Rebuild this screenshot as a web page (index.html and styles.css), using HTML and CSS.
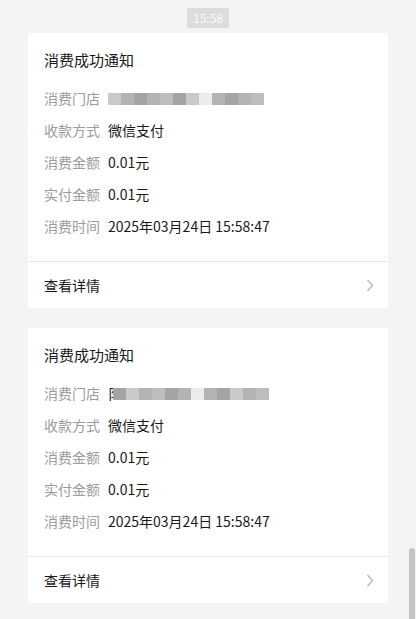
FILE: index.html
```html
<!DOCTYPE html>
<html lang="zh-CN">
<head>
    <meta charset="UTF-8">
    <meta name="viewport" content="width=device-width, initial-scale=1.0">
    <title>消费成功通知</title>
    <link rel="stylesheet" href="styles.css">
</head>
<body>
    <div id="chat">
        <!-- 时间标签 -->
        <div class="time-row"><span class="time-chip">15:58</span></div>

        <!-- 通知卡片 1 -->
        <div class="card">
            <div class="card-body">
                <div class="card-title">消费成功通知</div>
                <div class="field">
                    <span class="label">消费门店</span>
                    <span class="mosaic">
                        <i class="m1"></i><i class="m2"></i><i class="m3"></i><i class="m2"></i><i class="m4"></i><i class="m3"></i><i class="m1"></i><i class="m5"></i><i class="m2"></i><i class="m3"></i><i class="m2"></i><i class="m4"></i>
                    </span>
                </div>
                <div class="field"><span class="label">收款方式</span><span class="value">微信支付</span></div>
                <div class="field"><span class="label">消费金额</span><span class="value">0.01元</span></div>
                <div class="field"><span class="label">实付金额</span><span class="value">0.01元</span></div>
                <div class="field"><span class="label">消费时间</span><span class="value">2025年03月24日 15:58:47</span></div>
            </div>
            <div class="card-footer">
                <span>查看详情</span>
                <svg class="chevron" width="8" height="13" viewBox="0 0 8 13"><path d="M1.5 1 L6.5 6.5 L1.5 12" fill="none" stroke="#b5b5b5" stroke-width="1.3"/></svg>
            </div>
        </div>

        <!-- 通知卡片 2 -->
        <div class="card">
            <div class="card-body">
                <div class="card-title">消费成功通知</div>
                <div class="field">
                    <span class="label">消费门店</span>
                    <span class="value">阝</span>
                    <span class="mosaic mosaic-over">
                        <i class="m3"></i><i class="m1"></i><i class="m2"></i><i class="m4"></i><i class="m3"></i><i class="m2"></i><i class="m5"></i><i class="m2"></i><i class="m3"></i><i class="m1"></i><i class="m2"></i><i class="m4"></i>
                    </span>
                </div>
                <div class="field"><span class="label">收款方式</span><span class="value">微信支付</span></div>
                <div class="field"><span class="label">消费金额</span><span class="value">0.01元</span></div>
                <div class="field"><span class="label">实付金额</span><span class="value">0.01元</span></div>
                <div class="field"><span class="label">消费时间</span><span class="value">2025年03月24日 15:58:47</span></div>
            </div>
            <div class="card-footer">
                <span>查看详情</span>
                <svg class="chevron" width="8" height="13" viewBox="0 0 8 13"><path d="M1.5 1 L6.5 6.5 L1.5 12" fill="none" stroke="#b5b5b5" stroke-width="1.3"/></svg>
            </div>
        </div>
    </div>

    <!-- 滚动条 -->
    <div class="scrollbar"></div>
</body>
</html>
```

FILE: styles.css
```css
/* 页面整体 */
body {
    margin: 0;
    background-color: #f4f4f4;
    font-family: "Noto Sans CJK SC", "Noto Sans", sans-serif;
    color: #191919;
    overflow: hidden;
}
#chat {
    display: flex;
    flex-direction: column;
    align-items: center;
    padding: 4px 0 0;
    gap: 20px;
}
/* 时间标签 */
.time-row {
    height: 20px;
    margin-bottom: -11px;
}
.time-chip {
    display: inline-block;
    height: 20px;
    line-height: 20px;
    padding: 0 6px;
    border-radius: 2px;
    background: #dcdcdc;
    color: #fafafa;
    font-size: 12px;
}
/* 卡片 */
.card {
    width: 360px;
    background: #fff;
    border-radius: 3px;
}
.card-body {
    padding: 16px 16px 19px;
    border-bottom: 1px solid #e7e7e7;
}
.card-title {
    font-size: 15px;
    line-height: 22px;
    margin-bottom: 11px;
}
.field {
    display: flex;
    align-items: center;
    height: 32px;
    font-size: 14px;
}
.label {
    color: #9b9b9b;
    width: 56px;
    margin-right: 8px;
    flex-shrink: 0;
}
.value {
    color: #191919;
}
/* 打码的门店名 */
.mosaic {
    display: flex;
    height: 12px;
    margin-top: 1px;
}
.mosaic-over {
    position: relative;
    margin-left: -9px;
}
.mosaic i {
    width: 13px;
    height: 12px;
}
.mosaic .m1 { background: #c9c9c9; }
.mosaic .m2 { background: #b3b3b3; }
.mosaic .m3 { background: #a4a4a4; }
.mosaic .m4 { background: #bdbdbd; }
.mosaic .m5 { background: #ececec; }
/* 查看详情 */
.card-footer {
    display: flex;
    align-items: center;
    justify-content: space-between;
    height: 46px;
    padding: 0 14px 0 16px;
    font-size: 14px;
}
.scrollbar {
    position: fixed;
    right: 1px;
    top: 548px;
    width: 6px;
    height: 80px;
    border-radius: 3px;
    background: #c4c4c4;
}
```
